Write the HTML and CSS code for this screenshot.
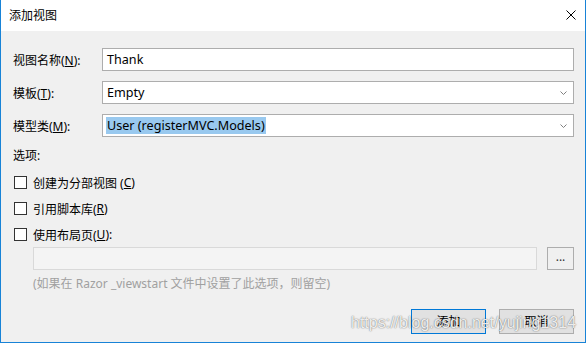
FILE: index.html
```html
<!DOCTYPE html>
<html lang="zh-CN">
<head>
  <meta charset="UTF-8">
  <title>添加视图</title>
  <link rel="stylesheet" href="styles.css">
</head>
<body>
  <div class="window">
    <div class="titlebar">
      <span class="title">添加视图</span>
      <svg class="close" width="10" height="10" viewBox="0 0 10 10">
        <path d="M0.5 0.5 L9.5 9.5 M9.5 0.5 L0.5 9.5" stroke="#000" stroke-width="1" fill="none"/>
      </svg>
    </div>

    <div class="content">
      <div class="field">
        <label>视图名称(<u>N</u>):</label>
        <div class="box">Thank</div>
      </div>
      <div class="field">
        <label>模板(<u>T</u>):</label>
        <div class="box select">Empty
          <svg class="chevron" width="7" height="4" viewBox="0 0 7 4"><path d="M0.5 0.5 L3.5 3.5 L6.5 0.5" stroke="#808080" fill="none"/></svg>
        </div>
      </div>
      <div class="field">
        <label>模型类(<u>M</u>):</label>
        <div class="box select"><span class="selected">User (registerMVC.Models)</span>
          <svg class="chevron" width="7" height="4" viewBox="0 0 7 4"><path d="M0.5 0.5 L3.5 3.5 L6.5 0.5" stroke="#808080" fill="none"/></svg>
        </div>
      </div>

      <p class="options">选项:</p>

      <div class="check first"><span class="checkbox"></span>创建为分部视图 (<u>C</u>)</div>
      <div class="check"><span class="checkbox"></span>引用脚本库(<u>R</u>)</div>
      <div class="check"><span class="checkbox"></span>使用布局页(<u>U</u>):</div>

      <div class="layout-row">
        <div class="box disabled"></div>
        <div class="browse">...</div>
      </div>
      <p class="hint">(如果在 Razor _viewstart 文件中设置了此选项，则留空)</p>

      <div class="buttons">
        <div class="btn default">添加</div>
        <div class="btn">取消</div>
      </div>
    </div>

    <div class="watermark">https://blog.csdn.net/yujing1314</div>
  </div>
</body>
</html>
```

FILE: styles.css
```css
body {
  margin: 0;
  font-family: "Noto Sans", "Noto Sans CJK SC", sans-serif;
  font-size: 12px;
  color: #000;
}
.window {
  position: relative;
  width: 586px;
  height: 343px;
  box-sizing: border-box;
  border: 1px solid #1883d7;
  border-top: none;
  background: #f0f0f0;
  overflow: hidden;
}
.titlebar {
  height: 31px;
  background: #fff;
  display: flex;
  align-items: center;
  justify-content: space-between;
  padding: 0 9px 0 8px;
}
.title {
  margin-top: -2px;
}
.close {
  margin-top: -1px;
}

.content {
  padding: 17px 11px 0 12px;
}
.field {
  display: flex;
  align-items: center;
  height: 23px;
  margin-bottom: 10px;
}
.field label {
  width: 89px;
}
.box {
  flex: 1;
  position: relative;
  height: 23px;
  box-sizing: border-box;
  border: 1px solid #adadad;
  background: #fff;
  padding: 0 4px;
  font-size: 12.6px;
  line-height: 21px;
}
.chevron {
  position: absolute;
  right: 6px;
  top: 9px;
}
.selected {
  background: #99c9ef;
  padding: 0 1px;
  margin-left: -1px;
}

.options {
  margin: 0;
  height: 18px;
  line-height: 18px;
}
.check {
  display: flex;
  align-items: center;
  height: 13px;
  margin-top: 14px;
  margin-left: 1px;
}
.check.first {
  margin-top: 11px;
}
.check + .check {
  margin-top: 13px;
}
.checkbox {
  width: 13px;
  height: 13px;
  box-sizing: border-box;
  border: 1px solid #333;
  background: #fff;
  margin-right: 6px;
}

.layout-row {
  display: flex;
  gap: 10px;
  margin: 6px 0 0 20px;
}
.box.disabled {
  background: #f4f4f4;
  border-color: #d9d9d9;
}
.browse {
  width: 27px;
  height: 23px;
  box-sizing: border-box;
  border: 1px solid #adadad;
  text-align: center;
  line-height: 17px;
  color: #333;
}
.hint {
  margin: 5px 0 0 20px;
  height: 18px;
  line-height: 18px;
  color: #a0a0a0;
}

.buttons {
  display: flex;
  justify-content: flex-end;
  gap: 13px;
  margin-top: 16px;
}
.btn {
  width: 75px;
  height: 25px;
  box-sizing: border-box;
  border: 1px solid #adadad;
  background: #e1e1e1;
  text-align: center;
  line-height: 23px;
}
.btn.default {
  border-color: #0078d7;
}

.watermark {
  position: absolute;
  left: 350px;
  top: 314px;
  font-family: "Liberation Sans", Arial, sans-serif;
  font-size: 16px;
  color: rgba(255, 255, 255, 0.9);
  text-shadow: 0 0 1px rgba(0, 0, 0, 0.5), 0 0 2px rgba(0, 0, 0, 0.25);
  white-space: nowrap;
  pointer-events: none;
}
```
